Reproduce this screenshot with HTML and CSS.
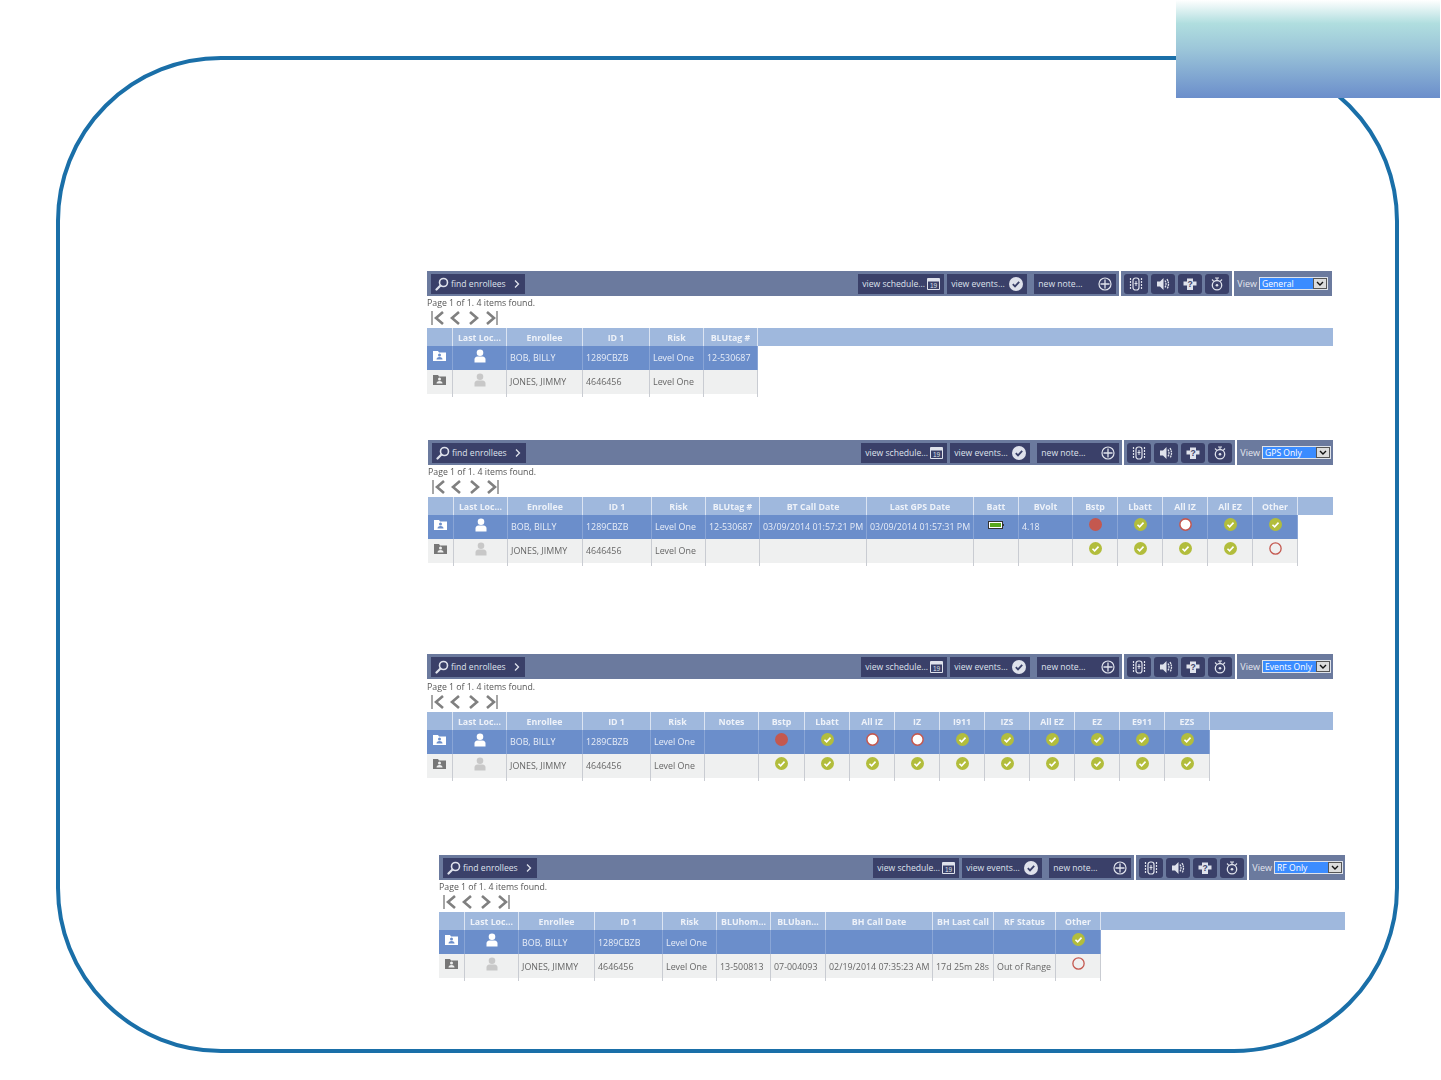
FILE: index.html
```html
<!DOCTYPE html>
<html lang="en">
<head>
    <meta charset="UTF-8">
    <meta name="viewport" content="width=device-width, initial-scale=1.0">
    <title>Enrollee Views</title>
    <link rel="stylesheet" href="styles.css">
</head>
<body>
    <svg class="sprite" xmlns="http://www.w3.org/2000/svg">
        <symbol id="i-search" viewBox="0 0 14 14"><circle cx="8.5" cy="5.5" r="4" fill="none" stroke="currentColor" stroke-width="1.6"/><path d="M5.5 8.500 1.500 12.500" stroke="currentColor" stroke-width="2.200" stroke-linecap="round"/></symbol>
        <symbol id="i-chev" viewBox="0 0 8 10"><path d="M2 1.500 5.500 5 2 8.500" fill="none" stroke="currentColor" stroke-width="1.300"/></symbol>
        <symbol id="i-cal" viewBox="0 0 13 12"><path d="M.5.5h12v11H.5z" fill="#3a4069" stroke="currentColor"/><path d="M1 1h11v2.500H1z" fill="currentColor"/><text x="6.500" y="10" font-size="6.500" text-anchor="middle" fill="currentColor" font-family="Liberation Sans">19</text></symbol>
        <symbol id="i-tick" viewBox="0 0 14 14"><circle cx="7" cy="7" r="7" fill="currentColor"/><path d="M3.800 7.200 6 9.400l4.200-4.600" fill="none" stroke="#3a4069" stroke-width="1.800"/></symbol>
        <symbol id="i-plus" viewBox="0 0 14 14"><circle cx="7" cy="7" r="6" fill="none" stroke="currentColor" stroke-width="1.200"/><path d="M7 2.500v9M2.500 7h9" stroke="currentColor" stroke-width="1.300"/></symbol>
        <symbol id="i-tag" viewBox="0 0 14 16"><rect x="4" y="2" width="6" height="12" rx="2.500" fill="none" stroke="currentColor" stroke-width="1.200"/><path d="M7 5v5M5.500 7.500h3" stroke="currentColor"/><path d="M1.500 2v12M12.500 2v12" stroke="currentColor" stroke-width="1.200" stroke-dasharray="2 1"/></symbol>
        <symbol id="i-sound" viewBox="0 0 14 14"><path d="M1 4.500h3l3.500-3.500v12L4 9.500H1z" fill="currentColor"/><path d="M9 3.500q2 3.500 0 7M11 2q3 5 0 10" fill="none" stroke="currentColor" stroke-width="1.300" stroke-dasharray="2 .6"/></symbol>
        <symbol id="i-help" viewBox="0 0 14 14"><path d="M4 1.500h6v3h3.500v4H10v4.500H4V8.500H.5v-4H4z" fill="currentColor"/><text x="7" y="10" font-size="8.500" font-weight="700" text-anchor="middle" fill="#3a4069" font-family="Liberation Sans">?</text></symbol>
        <symbol id="i-watch" viewBox="0 0 14 14"><circle cx="7" cy="8.200" r="4.700" fill="none" stroke="currentColor" stroke-width="1.300"/><circle cx="7" cy="8.200" r="1.300" fill="currentColor"/><path d="M5 1h4M7 1v2M2 2.500l1.800 1.800M12 2.500l-1.800 1.800" fill="none" stroke="currentColor" stroke-width="1.100"/></symbol>
        <symbol id="i-folder" viewBox="0 0 13 11"><path d="M0 1h5l1 1.500h7V11H0z" fill="currentColor"/><circle cx="6.500" cy="5" r="1.500" fill="var(--cut)"/><path d="M3.500 9.500q0-2.500 3-2.500t3 2.500z" fill="var(--cut)"/></symbol>
        <symbol id="i-person" viewBox="0 0 12 14"><circle cx="6" cy="3.800" r="3.300" fill="currentColor"/><path d="M.5 13.500V10.500Q.5 7.800 3.500 7.500h5Q11.500 7.800 11.500 10.500v3z" fill="currentColor"/></symbol>
        <symbol id="i-ok" viewBox="0 0 12 12"><circle cx="6" cy="6" r="6" fill="#b2bd3c"/><path d="M3.200 6.200 5.200 8.200 8.800 4.300" fill="none" stroke="#fff" stroke-width="1.500"/></symbol>
        <symbol id="i-alarm" viewBox="0 0 12 12"><circle cx="6" cy="6" r="6" fill="#c4584f"/></symbol>
        <symbol id="i-ring" viewBox="0 0 12 12"><circle cx="6" cy="6" r="5.200" fill="#fff" stroke="#c4584f" stroke-width="1.400"/></symbol>
        <symbol id="i-ring-off" viewBox="0 0 12 12"><circle cx="6" cy="6" r="5.200" fill="none" stroke="#c4584f" stroke-width="1.200"/></symbol>
        <symbol id="i-batt" viewBox="0 0 16 8"><rect x=".5" y=".5" width="14" height="7" fill="#fff" stroke="#333"/><rect x="2" y="2" width="11" height="4" fill="#58a81c"/><path d="M15 3h1v2h-1z" fill="#333"/></symbol>
        <symbol id="i-pager" viewBox="0 0 68 16"><g fill="none" stroke="#808080" stroke-width="2.600"><path d="M1 1v14" stroke-width="1.400"/><path d="M12 2 5 8l7 6M28 2l-7 6 7 6M39 2l7 6-7 6M56 2l7 6-7 6"/><path d="M66 1v14" stroke-width="1.400"/></g></symbol>
    </svg>

    <div class="corner-tab"></div>

    <div class="frame">

        <section class="panel panel-general">
            <div class="toolbar">
                <a class="tool find"><svg class="ico-search"><use href="#i-search"/></svg>find enrollees<svg class="ico-chev"><use href="#i-chev"/></svg></a>
                <div class="tools-right">
                    <a class="tool schedule">view schedule...<svg class="ico-cal"><use href="#i-cal"/></svg></a>
                    <a class="tool events">view events...<svg class="ico-14"><use href="#i-tick"/></svg></a>
                    <a class="tool note">new note...<svg class="ico-14"><use href="#i-plus"/></svg></a>
                    <span class="tool-sep"></span>
                    <a class="tool square"><svg class="ico-tag"><use href="#i-tag"/></svg></a>
                    <a class="tool square"><svg class="ico-14"><use href="#i-sound"/></svg></a>
                    <a class="tool square"><svg class="ico-14"><use href="#i-help"/></svg></a>
                    <a class="tool square"><svg class="ico-14"><use href="#i-watch"/></svg></a>
                    <span class="tool-sep"></span>
                    <span class="view-label">View</span>
                    <div class="view-select"><span class="view-value">General</span><span class="view-btn"><svg class="ico-drop" viewBox="0 0 8 5"><path d="M1 1l3 3 3-3" fill="none" stroke="#111" stroke-width="1.400"/></svg></span></div>
                    <span class="tool-sep end-sep"></span>
                </div>
            </div>
            <p class="page-info">Page 1 of 1. 4 items found.</p>
            <svg class="pager"><use href="#i-pager"/></svg>
            <div class="grid-head">
                <div></div><div>Last Loc...</div><div>Enrollee</div><div>ID 1</div><div>Risk</div><div>BLUtag #</div><div></div>
            </div>
            <div class="grid-row selected">
                <div class="c"><svg class="ico-folder"><use href="#i-folder"/></svg></div><div class="c"><svg class="ico-person"><use href="#i-person"/></svg></div>
                <div class="t">BOB, BILLY</div><div class="t">1289CBZB</div><div class="t">Level One</div><div class="t">12-530687</div>
            </div>
            <div class="grid-row alt">
                <div class="c"><svg class="ico-folder"><use href="#i-folder"/></svg></div><div class="c"><svg class="ico-person"><use href="#i-person"/></svg></div>
                <div class="t">JONES, JIMMY</div><div class="t">4646456</div><div class="t">Level One</div><div class="t"></div>
            </div>
        </section>

        <section class="panel panel-gps">
            <div class="toolbar">
                <a class="tool find"><svg class="ico-search"><use href="#i-search"/></svg>find enrollees<svg class="ico-chev"><use href="#i-chev"/></svg></a>
                <div class="tools-right">
                    <a class="tool schedule">view schedule...<svg class="ico-cal"><use href="#i-cal"/></svg></a>
                    <a class="tool events">view events...<svg class="ico-14"><use href="#i-tick"/></svg></a>
                    <a class="tool note">new note...<svg class="ico-14"><use href="#i-plus"/></svg></a>
                    <span class="tool-sep"></span>
                    <a class="tool square"><svg class="ico-tag"><use href="#i-tag"/></svg></a>
                    <a class="tool square"><svg class="ico-14"><use href="#i-sound"/></svg></a>
                    <a class="tool square"><svg class="ico-14"><use href="#i-help"/></svg></a>
                    <a class="tool square"><svg class="ico-14"><use href="#i-watch"/></svg></a>
                    <span class="tool-sep"></span>
                    <span class="view-label">View</span>
                    <div class="view-select"><span class="view-value">GPS Only</span><span class="view-btn"><svg class="ico-drop" viewBox="0 0 8 5"><path d="M1 1l3 3 3-3" fill="none" stroke="#111" stroke-width="1.400"/></svg></span></div>
                </div>
            </div>
            <p class="page-info">Page 1 of 1. 4 items found.</p>
            <svg class="pager"><use href="#i-pager"/></svg>
            <div class="grid-head">
                <div></div><div>Last Loc...</div><div>Enrollee</div><div>ID 1</div><div>Risk</div><div>BLUtag #</div><div>BT Call Date</div><div>Last GPS Date</div><div>Batt</div><div>BVolt</div><div>Bstp</div><div>Lbatt</div><div>All IZ</div><div>All EZ</div><div>Other</div><div></div>
            </div>
            <div class="grid-row selected">
                <div class="c"><svg class="ico-folder"><use href="#i-folder"/></svg></div><div class="c"><svg class="ico-person"><use href="#i-person"/></svg></div>
                <div class="t">BOB, BILLY</div><div class="t">1289CBZB</div><div class="t">Level One</div><div class="t">12-530687</div>
                <div class="t">03/09/2014 01:57:21 PM</div><div class="t">03/09/2014 01:57:31 PM</div>
                <div class="c"><svg class="ico-batt"><use href="#i-batt"/></svg></div><div class="t">4.18</div>
                <div class="c"><svg class="dot"><use href="#i-alarm"/></svg></div><div class="c"><svg class="dot"><use href="#i-ok"/></svg></div><div class="c"><svg class="dot"><use href="#i-ring"/></svg></div><div class="c"><svg class="dot"><use href="#i-ok"/></svg></div><div class="c"><svg class="dot"><use href="#i-ok"/></svg></div>
            </div>
            <div class="grid-row alt">
                <div class="c"><svg class="ico-folder"><use href="#i-folder"/></svg></div><div class="c"><svg class="ico-person"><use href="#i-person"/></svg></div>
                <div class="t">JONES, JIMMY</div><div class="t">4646456</div><div class="t">Level One</div><div class="t"></div>
                <div class="t"></div><div class="t"></div><div class="t"></div><div class="t"></div>
                <div class="c"><svg class="dot"><use href="#i-ok"/></svg></div><div class="c"><svg class="dot"><use href="#i-ok"/></svg></div><div class="c"><svg class="dot"><use href="#i-ok"/></svg></div><div class="c"><svg class="dot"><use href="#i-ok"/></svg></div><div class="c"><svg class="dot"><use href="#i-ring-off"/></svg></div>
            </div>
        </section>

        <section class="panel panel-events">
            <div class="toolbar">
                <a class="tool find"><svg class="ico-search"><use href="#i-search"/></svg>find enrollees<svg class="ico-chev"><use href="#i-chev"/></svg></a>
                <div class="tools-right">
                    <a class="tool schedule">view schedule...<svg class="ico-cal"><use href="#i-cal"/></svg></a>
                    <a class="tool events">view events...<svg class="ico-14"><use href="#i-tick"/></svg></a>
                    <a class="tool note">new note...<svg class="ico-14"><use href="#i-plus"/></svg></a>
                    <span class="tool-sep"></span>
                    <a class="tool square"><svg class="ico-tag"><use href="#i-tag"/></svg></a>
                    <a class="tool square"><svg class="ico-14"><use href="#i-sound"/></svg></a>
                    <a class="tool square"><svg class="ico-14"><use href="#i-help"/></svg></a>
                    <a class="tool square"><svg class="ico-14"><use href="#i-watch"/></svg></a>
                    <span class="tool-sep"></span>
                    <span class="view-label">View</span>
                    <div class="view-select"><span class="view-value">Events Only</span><span class="view-btn"><svg class="ico-drop" viewBox="0 0 8 5"><path d="M1 1l3 3 3-3" fill="none" stroke="#111" stroke-width="1.400"/></svg></span></div>
                </div>
            </div>
            <p class="page-info">Page 1 of 1. 4 items found.</p>
            <svg class="pager"><use href="#i-pager"/></svg>
            <div class="grid-head">
                <div></div><div>Last Loc...</div><div>Enrollee</div><div>ID 1</div><div>Risk</div><div>Notes</div><div>Bstp</div><div>Lbatt</div><div>All IZ</div><div>IZ</div><div>I911</div><div>IZS</div><div>All EZ</div><div>EZ</div><div>E911</div><div>EZS</div><div></div>
            </div>
            <div class="grid-row selected">
                <div class="c"><svg class="ico-folder"><use href="#i-folder"/></svg></div><div class="c"><svg class="ico-person"><use href="#i-person"/></svg></div>
                <div class="t">BOB, BILLY</div><div class="t">1289CBZB</div><div class="t">Level One</div><div class="t"></div>
                <div class="c"><svg class="dot"><use href="#i-alarm"/></svg></div><div class="c"><svg class="dot"><use href="#i-ok"/></svg></div><div class="c"><svg class="dot"><use href="#i-ring"/></svg></div><div class="c"><svg class="dot"><use href="#i-ring"/></svg></div><div class="c"><svg class="dot"><use href="#i-ok"/></svg></div><div class="c"><svg class="dot"><use href="#i-ok"/></svg></div><div class="c"><svg class="dot"><use href="#i-ok"/></svg></div><div class="c"><svg class="dot"><use href="#i-ok"/></svg></div><div class="c"><svg class="dot"><use href="#i-ok"/></svg></div><div class="c"><svg class="dot"><use href="#i-ok"/></svg></div>
            </div>
            <div class="grid-row alt">
                <div class="c"><svg class="ico-folder"><use href="#i-folder"/></svg></div><div class="c"><svg class="ico-person"><use href="#i-person"/></svg></div>
                <div class="t">JONES, JIMMY</div><div class="t">4646456</div><div class="t">Level One</div><div class="t"></div>
                <div class="c"><svg class="dot"><use href="#i-ok"/></svg></div><div class="c"><svg class="dot"><use href="#i-ok"/></svg></div><div class="c"><svg class="dot"><use href="#i-ok"/></svg></div><div class="c"><svg class="dot"><use href="#i-ok"/></svg></div><div class="c"><svg class="dot"><use href="#i-ok"/></svg></div><div class="c"><svg class="dot"><use href="#i-ok"/></svg></div><div class="c"><svg class="dot"><use href="#i-ok"/></svg></div><div class="c"><svg class="dot"><use href="#i-ok"/></svg></div><div class="c"><svg class="dot"><use href="#i-ok"/></svg></div><div class="c"><svg class="dot"><use href="#i-ok"/></svg></div>
            </div>
        </section>

        <section class="panel panel-rf">
            <div class="toolbar">
                <a class="tool find"><svg class="ico-search"><use href="#i-search"/></svg>find enrollees<svg class="ico-chev"><use href="#i-chev"/></svg></a>
                <div class="tools-right">
                    <a class="tool schedule">view schedule...<svg class="ico-cal"><use href="#i-cal"/></svg></a>
                    <a class="tool events">view events...<svg class="ico-14"><use href="#i-tick"/></svg></a>
                    <a class="tool note">new note...<svg class="ico-14"><use href="#i-plus"/></svg></a>
                    <span class="tool-sep"></span>
                    <a class="tool square"><svg class="ico-tag"><use href="#i-tag"/></svg></a>
                    <a class="tool square"><svg class="ico-14"><use href="#i-sound"/></svg></a>
                    <a class="tool square"><svg class="ico-14"><use href="#i-help"/></svg></a>
                    <a class="tool square"><svg class="ico-14"><use href="#i-watch"/></svg></a>
                    <span class="tool-sep"></span>
                    <span class="view-label">View</span>
                    <div class="view-select"><span class="view-value">RF Only</span><span class="view-btn"><svg class="ico-drop" viewBox="0 0 8 5"><path d="M1 1l3 3 3-3" fill="none" stroke="#111" stroke-width="1.400"/></svg></span></div>
                </div>
            </div>
            <p class="page-info">Page 1 of 1. 4 items found.</p>
            <svg class="pager"><use href="#i-pager"/></svg>
            <div class="grid-head">
                <div></div><div>Last Loc...</div><div>Enrollee</div><div>ID 1</div><div>Risk</div><div>BLUhom...</div><div>BLUban...</div><div>BH Call Date</div><div>BH Last Call</div><div>RF Status</div><div>Other</div><div></div>
            </div>
            <div class="grid-row selected">
                <div class="c"><svg class="ico-folder"><use href="#i-folder"/></svg></div><div class="c"><svg class="ico-person"><use href="#i-person"/></svg></div>
                <div class="t">BOB, BILLY</div><div class="t">1289CBZB</div><div class="t">Level One</div><div class="t"></div><div class="t"></div><div class="t"></div><div class="t"></div><div class="t"></div>
                <div class="c"><svg class="dot"><use href="#i-ok"/></svg></div>
            </div>
            <div class="grid-row alt">
                <div class="c"><svg class="ico-folder"><use href="#i-folder"/></svg></div><div class="c"><svg class="ico-person"><use href="#i-person"/></svg></div>
                <div class="t">JONES, JIMMY</div><div class="t">4646456</div><div class="t">Level One</div><div class="t">13-500813</div><div class="t">07-004093</div><div class="t">02/19/2014 07:35:23 AM</div><div class="t">17d 25m 28s</div><div class="t">Out of Range</div>
                <div class="c"><svg class="dot"><use href="#i-ring-off"/></svg></div>
            </div>
        </section>

    </div>
</body>
</html>
```

FILE: styles.css
```css
body {
    margin: 0;
    background-color: #fff;
    font-family: "Open Sans", "Liberation Sans", sans-serif;
    font-size: 8.9px;
    color: #555;
}
.sprite {
    display: none;
}
.corner-tab {
    position: absolute;
    top: 0;
    right: 1px;
    width: 264px;
    height: 98px;
    background: linear-gradient(#fff 0, #b0dedf 24%, #9cc6d9 50%, #6b8ecb 100%);
}
.frame {
    box-sizing: border-box;
    width: 1343px;
    height: 997px;
    margin: 56px 0 0 56px;
    padding-top: 211px;
    border: 4px solid #1a6fa8;
    border-radius: 165px;
}

/* panels */
.panel {
    filter: blur(0.4px);
}
.panel-general {
    width: 906px;
    margin-left: 367px;
    --cols: 26px 54px 76px 67px 54px 54px 1fr;
}
.panel-gps {
    width: 905px;
    margin: 43px 0 0 368px;
    --cols: 26px 54px 75px 69px 54px 54px 107px 107px 45px 54px 45px 45px 45px 45px 45px 1fr;
}
.panel-events {
    width: 906px;
    margin: 88px 0 0 367px;
    --cols: 26px 54px 76px 68px 54px 54px 46px 45px 45px 45px 45px 45px 45px 45px 45px 45px 1fr;
}
.panel-rf {
    width: 906px;
    margin: 74px 0 0 379px;
    --cols: 26px 54px 76px 68px 54px 54px 55px 107px 61px 62px 45px 1fr;
}

/* toolbar */
.toolbar {
    display: flex;
    justify-content: space-between;
    align-items: center;
    height: 25px;
    padding: 0 2px 0 4px;
    background-color: #6b7a9e;
}
.panel-general .toolbar {
    padding-right: 0;
}
.tools-right {
    display: flex;
    align-items: center;
}
.tool {
    display: flex;
    align-items: center;
    justify-content: space-between;
    box-sizing: border-box;
    height: 20px;
    padding: 0 4px;
    background-color: #3a4069;
    color: #dfe2ec;
    font-size: 8.6px;
    white-space: nowrap;
}
.find {
    width: 94px;
    justify-content: flex-start;
}
.schedule {
    width: 86px;
    margin-right: 3px;
}
.events {
    width: 80px;
    margin-right: 7px;
}
.note {
    width: 82px;
}
.square {
    justify-content: center;
    width: 24px;
    margin-left: 3px;
    padding: 0;
    border-radius: 3px;
}
.tool-sep {
    width: 2px;
    height: 25px;
    margin: 0 3px;
    background-color: #fff;
}
.tool-sep + .square {
    margin-left: 0;
}
.end-sep {
    width: 1px;
    margin: 0 0 0 4px;
}
.view-label {
    color: #e3e6ef;
    font-size: 9px;
    margin-right: 2px;
}
.view-select {
    display: flex;
    box-sizing: border-box;
    width: 69px;
    height: 13px;
    padding: 1px;
    background-color: #dfe3ea;
}
.view-value {
    flex: 1;
    padding-left: 2px;
    background-color: #3b8cff;
    color: #fff;
    font-size: 8.6px;
    line-height: 13px;
    white-space: nowrap;
    overflow: hidden;
}
.view-btn {
    display: flex;
    align-items: center;
    justify-content: center;
    width: 14px;
    background-color: #dcdcdc;
    border: 1px solid #555;
    box-sizing: border-box;
}
.ico-drop {
    width: 8px;
    height: 5px;
}
.ico-search {
    width: 14px;
    height: 14px;
    margin-right: 2px;
}
.ico-chev {
    width: 8px;
    height: 10px;
    margin-left: auto;
}
.ico-cal {
    width: 13px;
    height: 12px;
}
.ico-14 {
    width: 14px;
    height: 14px;
}
.ico-tag {
    width: 14px;
    height: 16px;
}

/* paging */
.page-info {
    margin: 0;
    height: 13px;
    padding-top: 1px;
    line-height: 12px;
    font-size: 8.75px;
    color: #555;
}
.panel-events .page-info {
    padding-top: 2px;
}
.pager {
    display: block;
    width: 68px;
    height: 16px;
    margin: 0 0 2px 4px;
}

/* grid */
.grid-head,
.grid-row {
    display: grid;
    grid-template-columns: var(--cols);
}
.grid-head {
    height: 18px;
    background-color: #9fb8dd;
    color: #eef2f9;
    font-weight: 700;
    font-size: 8.8px;
    line-height: 20px;
    text-align: center;
}
.grid-head > div {
    border-right: 1px solid #dbe4f2;
    white-space: nowrap;
    overflow: hidden;
}
.grid-head > div:last-child {
    border-right: none;
}
.grid-row > div {
    display: flex;
    align-items: center;
    box-sizing: border-box;
    border-right: 1px solid #c9ccd2;
    white-space: nowrap;
    overflow: hidden;
}
.grid-row .t {
    padding-left: 3px;
}
.grid-row .c {
    justify-content: center;
}
.selected {
    height: 24px;
    color: #e8edf7;
    --cut: #6b8ecb;
}
.selected > div {
    background-color: #6b8ecb;
    border-right-color: #89a5d6;
}
.selected .t {
    padding-bottom: 2px;
}
.selected .c {
    padding-bottom: 5px;
}
.selected .c:first-child,
.selected .c:first-child + .c {
    color: #fff;
}
.alt {
    height: 27px;
    color: #666;
    --cut: #eff0f0;
}
.alt > div {
    height: 27px;
    padding-bottom: 5px;
    background: linear-gradient(#eff0f0 24px, #fff 24px);
}
.alt .c {
    padding-bottom: 8px;
}
.panel-rf .selected .t {
    padding-bottom: 0;
}
.panel-rf .alt .t {
    padding-bottom: 3px;
}
.ico-folder {
    width: 13px;
    height: 11px;
}
.alt .ico-folder {
    color: #777;
}
.ico-person {
    width: 12px;
    height: 14px;
}
.alt .ico-person {
    color: #c8c8c8;
}
.dot {
    width: 13px;
    height: 13px;
}
.ico-batt {
    width: 16px;
    height: 8px;
}
```
